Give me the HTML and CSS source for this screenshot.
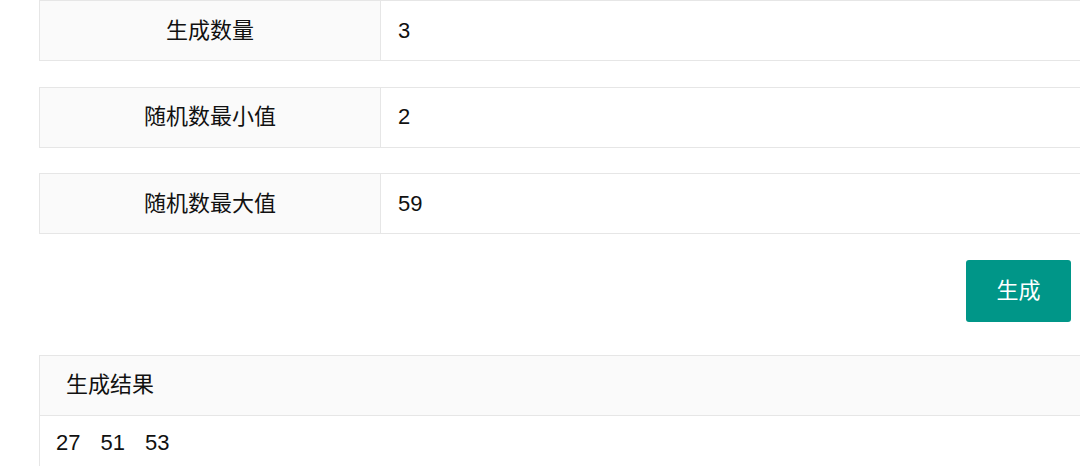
FILE: index.html
```html
<!DOCTYPE html>
<html lang="zh">
<head>
<meta charset="utf-8">
<link rel="stylesheet" href="styles.css">
</head>
<body>
<div class="page">
  <div class="form-row">
    <div class="label">生成数量</div>
    <div class="input">3</div>
  </div>
  <div class="form-row">
    <div class="label">随机数最小值</div>
    <div class="input">2</div>
  </div>
  <div class="form-row">
    <div class="label">随机数最大值</div>
    <div class="input">59</div>
  </div>
  <div class="actions">
    <button class="btn">生成</button>
  </div>
  <div class="card">
    <div class="card-header">生成结果</div>
    <div class="card-body"><span>27</span><span>51</span><span>53</span></div>
  </div>
</div>
</body>
</html>
```
FILE: styles.css
```css
html, body {
  margin: 0;
  padding: 0;
  background: #fff;
  overflow: hidden;
}
body {
  width: 1080px;
  height: 466px;
  font-family: "Liberation Sans", "Noto Sans CJK SC", sans-serif;
  font-size: 22px;
  line-height: 24px;
  color: #111;
}
.page {
  width: 1100px;
  padding-left: 39px;
}
.form-row {
  display: flex;
  height: 61px;
  box-sizing: border-box;
  border: 1px solid #e6e6e6;
  margin-bottom: 25.5px;
}
.label {
  width: 340px;
  flex: none;
  background: #fafafa;
  border-right: 1px solid #e6e6e6;
  display: flex;
  align-items: center;
  justify-content: center;
}
.input {
  flex: 1;
  background: #fff;
  display: flex;
  align-items: center;
  padding-left: 17px;
}
.actions {
  width: 1032px;
  display: flex;
  justify-content: flex-end;
}
.btn {
  width: 105px;
  height: 62px;
  border: none;
  border-radius: 3px;
  background: #009688;
  color: #fff;
  font-family: inherit;
  font-size: 22px;
  line-height: 24px;
  padding: 0;
}
.card {
  margin-top: 33px;
  border: 1px solid #e6e6e6;
  border-right: none;
}
.card-header {
  height: 60px;
  box-sizing: border-box;
  background: #fafafa;
  border-bottom: 1px solid #e6e6e6;
  display: flex;
  align-items: center;
  padding-left: 26px;
}
.card-body {
  display: flex;
  gap: 20px;
  padding: 15px 16px 20px;
  line-height: 24px;
}
```
